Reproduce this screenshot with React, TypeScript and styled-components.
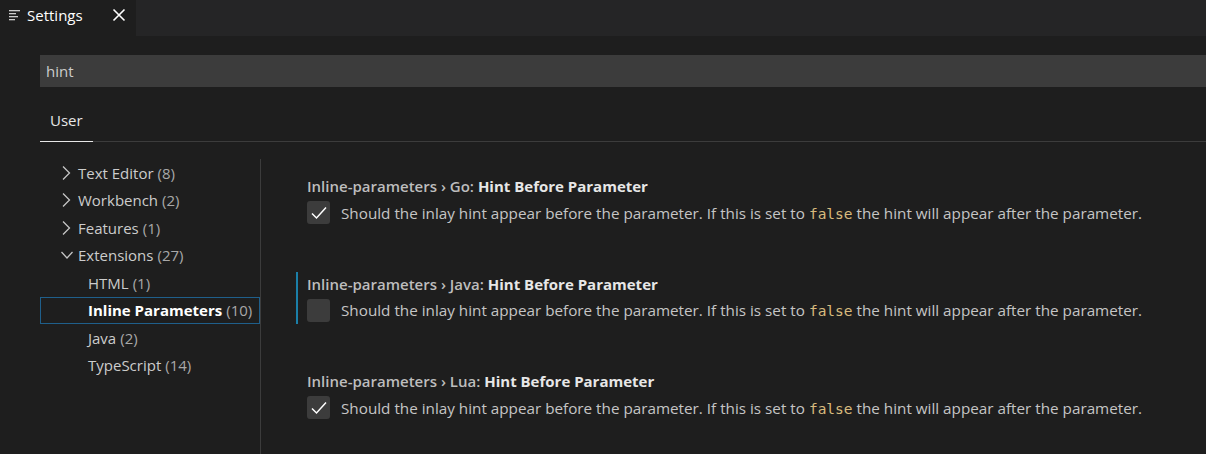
import React from "react";
import styled, { createGlobalStyle } from "styled-components";

const GlobalStyle = createGlobalStyle`
  html, body {
    margin: 0;
    padding: 0;
    background: #1e1e1e;
  }
  body {
    font-family: "Open Sans", "Noto Sans", sans-serif;
    color: #cccccc;
    overflow: hidden;
  }
`;

// Styled Components
const Page = styled.div`
  width: 1206px;
  height: 454px;
  display: flex;
  flex-direction: column;
  background: #1e1e1e;
  overflow: hidden;
`;

const TabBar = styled.div`
  height: 36px;
  display: flex;
  background: #252526;
  flex-shrink: 0;
`;

const Tab = styled.div`
  width: 136px;
  display: flex;
  align-items: center;
  background: #1e1e1e;
  padding: 0 0 6px 9px;
  box-sizing: border-box;
  font-size: 15px;
  color: #ffffff;
`;

const TabTitle = styled.span`
  margin-left: 6px;
  flex: 1;
`;

const CloseBtn = styled.span`
  display: flex;
  margin-right: 10px;
`;

const Body = styled.div`
  flex: 1;
  display: flex;
  flex-direction: column;
  padding-left: 40px;
  min-height: 0;
`;

const SearchBox = styled.div`
  margin-top: 19px;
  height: 32px;
  background: #3c3c3c;
  display: flex;
  align-items: center;
  padding-left: 6px;
  font-size: 15px;
  color: #cccccc;
`;

const ScopeBar = styled.div`
  margin-top: 23px;
  display: flex;
  border-bottom: 1px solid #3c3c3c;
`;

const ScopeTab = styled.div`
  padding: 0 10px 11px;
  font-size: 15px;
  color: #e7e7e7;
  border-bottom: 1px solid #e7e7e7;
  margin-bottom: -1px;
`;

const Main = styled.div`
  flex: 1;
  display: flex;
  min-height: 0;
  margin-top: 15px;
`;

const Tree = styled.div`
  width: 220px;
  border-right: 1px solid #3c3c3c;
  margin-top: 2px;
`;

const TreeRow = styled.div<{ $depth: number; $selected?: boolean }>`
  height: 27.5px;
  box-sizing: border-box;
  display: flex;
  align-items: center;
  padding-left: ${(p) => (p.$depth === 0 ? 19 : 47)}px;
  font-size: 15px;
  color: #cccccc;
  border: 1px solid ${(p) => (p.$selected ? "#1f5f8b" : "transparent")};
  white-space: nowrap;
`;

const Chevron = styled.span`
  width: 18px;
  display: flex;
  align-items: center;
`;

const Label = styled.span<{ $bold?: boolean }>`
  font-weight: ${(p) => (p.$bold ? 700 : 400)};
  color: ${(p) => (p.$bold ? "#ffffff" : "#cccccc")};
`;

const Count = styled.span`
  color: #a8a8a8;
  margin-left: 4px;
`;

const SettingsList = styled.div`
  flex: 1;
  padding-left: 35px;
  padding-top: 13px;
`;

const SettingItem = styled.div<{ $focused?: boolean }>`
  height: 97.5px;
  box-sizing: border-box;
  padding-left: 11px;
  padding-top: 5px;
  position: relative;
  &::before {
    content: "";
    display: ${(p) => (p.$focused ? "block" : "none")};
    position: absolute;
    left: 0;
    top: 4px;
    width: 2px;
    height: 52px;
    background: #1b7fa8;
  }
`;

const Title = styled.div`
  font-size: 15px;
  font-weight: 600;
  color: #bdbdbd;
  height: 22px;
  line-height: 22px;
`;

const TitleKey = styled.span`
  color: #e7e7e7;
  font-weight: 700;
`;

const ValueRow = styled.div`
  display: flex;
  align-items: center;
  margin-top: 4px;
`;

const CheckBox = styled.div`
  width: 23px;
  height: 23px;
  border-radius: 3px;
  background: #3c3c3c;
  display: flex;
  align-items: center;
  justify-content: center;
  flex-shrink: 0;
`;

const Description = styled.div`
  margin-left: 11px;
  font-size: 15.25px;
  color: #c5c5c5;
  white-space: nowrap;
`;

const Code = styled.code`
  font-family: "DejaVu Sans Mono", "Liberation Mono", monospace;
  font-size: 14.5px;
  color: #d7ba7d;
`;

const tree = [
  { label: "Text Editor", count: 8, depth: 0, open: false },
  { label: "Workbench", count: 2, depth: 0, open: false },
  { label: "Features", count: 1, depth: 0, open: false },
  { label: "Extensions", count: 27, depth: 0, open: true },
  { label: "HTML", count: 1, depth: 1 },
  { label: "Inline Parameters", count: 10, depth: 1, selected: true },
  { label: "Java", count: 2, depth: 1 },
  { label: "TypeScript", count: 14, depth: 1 },
];

const settings = [
  { lang: "Go", checked: true },
  { lang: "Java", checked: false, focused: true },
  { lang: "Lua", checked: true },
];

const ChevronIcon = ({ open }: { open?: boolean }) => (
  <svg width="14" height="16" viewBox="0 0 14 16" fill="none">
    {open ? (
      <path d="M1.5 5l5.5 6 5.5-6" stroke="#c5c5c5" strokeWidth="1.3" />
    ) : (
      <path d="M3 1.5l6.5 6.5L3 14.5" stroke="#c5c5c5" strokeWidth="1.3" />
    )}
  </svg>
);

const App = () => {
  return (
    <Page>
      <GlobalStyle />
      <TabBar>
        <Tab>
          <svg width="12" height="12" viewBox="0 0 12 12">
            <rect x="0" y="1" width="11" height="1.3" fill="#cccccc" />
            <rect x="0" y="4" width="7" height="1.3" fill="#cccccc" />
            <rect x="0" y="7" width="9" height="1.3" fill="#cccccc" />
            <rect x="0" y="10" width="6" height="1.3" fill="#cccccc" />
          </svg>
          <TabTitle>Settings</TabTitle>
          <CloseBtn>
            <svg width="14" height="14" viewBox="0 0 14 14">
              <path d="M1.5 1.5l11 11M12.5 1.5l-11 11" stroke="#ffffff" strokeWidth="1.6" />
            </svg>
          </CloseBtn>
        </Tab>
      </TabBar>
      <Body>
        <SearchBox>hint</SearchBox>
        <ScopeBar>
          <ScopeTab>User</ScopeTab>
        </ScopeBar>
        <Main>
          <Tree>
            {tree.map((t) => (
              <TreeRow key={t.label} $depth={t.depth} $selected={t.selected}>
                {t.depth === 0 && (
                  <Chevron>
                    <ChevronIcon open={t.open} />
                  </Chevron>
                )}
                <Label $bold={t.selected}>{t.label}</Label>
                <Count>({t.count})</Count>
              </TreeRow>
            ))}
          </Tree>
          <SettingsList>
            {settings.map((s) => (
              <SettingItem key={s.lang} $focused={s.focused}>
                <Title>
                  Inline-parameters › {s.lang}: <TitleKey>Hint Before Parameter</TitleKey>
                </Title>
                <ValueRow>
                  <CheckBox>
                    {s.checked && (
                      <svg width="20" height="20" viewBox="0 0 20 20" fill="none">
                        <path d="M3 10.5l4.5 4.5L17 4.5" stroke="#ffffff" strokeWidth="1.5" />
                      </svg>
                    )}
                  </CheckBox>
                  <Description>
                    Should the inlay hint appear before the parameter. If this is set to{" "}
                    <Code>false</Code> the hint will appear after the parameter.
                  </Description>
                </ValueRow>
              </SettingItem>
            ))}
          </SettingsList>
        </Main>
      </Body>
    </Page>
  );
};

export default App;
